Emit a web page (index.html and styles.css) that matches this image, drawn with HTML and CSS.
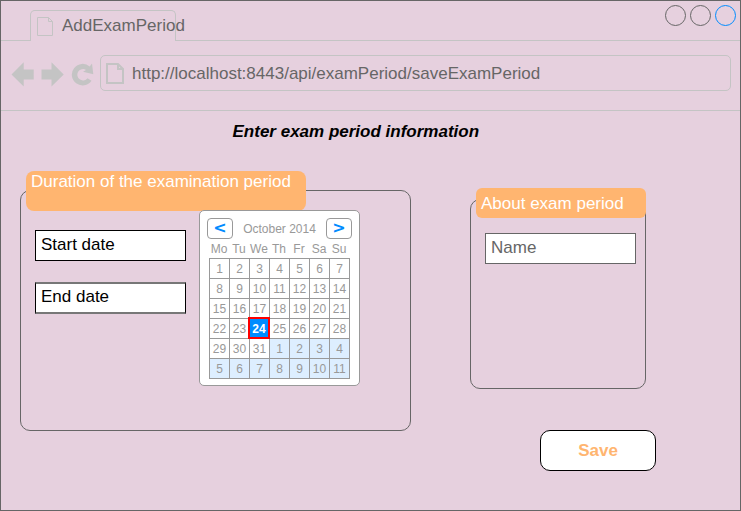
FILE: index.html
```html
<!DOCTYPE html>
<html lang="en">
<head>
<meta charset="utf-8">
<title>AddExamPeriod</title>
<link rel="stylesheet" href="styles.css">
</head>
<body>
<div class="window">
  <header class="tabs">
    <div class="tab">
      <svg class="tab-icon" width="17" height="20" viewBox="0 0 17 20"><path d="M.5.5h11l4 4v14H.5zM11.5.5v4h4"/></svg>
      <span>AddExamPeriod</span>
    </div>
    <div class="controls"><i></i><i></i><i class="active"></i></div>
  </header>
  <nav class="toolbar">
    <svg class="nav-icons" width="84" height="26" viewBox="11 61 84 26">
      <path d="M11.500 74.500 23.700 62.300v7.200h10v10h-10v7z"/>
      <path d="M63.700 74.500 51.500 62.300v7.200h-10v10h10v7z"/>
      <path d="M93.300 74.300 83 71.700 86 69.900A5.700 5.700 0 1 0 87.500 78.300L91.500 80.800A10.800 10.800 0 1 1 89.700 66.500L92 63.500z"/>
    </svg>
    <div class="address">
      <svg class="page-icon" width="18" height="21" viewBox="0 0 18 21"><path d="M1 1h11l5 5v14H1zM12 1v5h5"/></svg>
      <span>http://localhost:8443/api/examPeriod/saveExamPeriod</span>
    </div>
  </nav>
  <main>
    <h1>Enter exam period information</h1>
    <div class="columns">
      <section class="panel duration">
        <h2>Duration of the examination period</h2>
        <div class="dates">
          <div class="fields">
            <div class="field">Start date</div>
            <div class="field end">End date</div>
          </div>
          <div class="calendar">
            <div class="month">
              <span class="step">&lt;</span>
              <span>October 2014</span>
              <span class="step">&gt;</span>
            </div>
            <div class="weekdays"><b>Mo</b><b>Tu</b><b>We</b><b>Th</b><b>Fr</b><b>Sa</b><b>Su</b></div>
            <div class="days">
              <i>1</i><i>2</i><i>3</i><i>4</i><i>5</i><i>6</i><i>7</i>
              <i>8</i><i>9</i><i>10</i><i>11</i><i>12</i><i>13</i><i>14</i>
              <i>15</i><i>16</i><i>17</i><i>18</i><i>19</i><i>20</i><i>21</i>
              <i>22</i><i>23</i><i class="selected">24</i><i>25</i><i>26</i><i>27</i><i>28</i>
              <i>29</i><i>30</i><i>31</i><i class="next">1</i><i class="next">2</i><i class="next">3</i><i class="next">4</i>
              <i class="next">5</i><i class="next">6</i><i class="next">7</i><i class="next">8</i><i class="next">9</i><i class="next">10</i><i class="next">11</i>
            </div>
          </div>
        </div>
      </section>
      <div class="side">
        <section class="panel about">
          <h2>About exam period</h2>
          <div class="field name">Name</div>
        </section>
        <button class="save">Save</button>
      </div>
    </div>
  </main>
</div>
</body>
</html>
```
FILE: styles.css
```css
* { box-sizing: border-box; }
body { margin: 0; font-family: "Liberation Sans", Arial, sans-serif; font-size: 17px; line-height: 20px; color: #666; }
i { font-style: normal; }
svg { display: block; flex: none; }
.window { width: 741px; height: 511px; border: 1px solid #666; background: #e6d0de; overflow: hidden; }

.tabs { display: flex; justify-content: space-between; height: 40px; border-bottom: 1px solid #c4c4c4; }
.tab { display: flex; width: 146px; height: 31px; margin: 9px 0 0 29px; padding: 5px 0 0 6px; gap: 8px; border: 1px solid #c4c4c4; border-bottom: 0; border-radius: 5px 5px 0 0; background: #e6d0de; white-space: nowrap; }
.tab-icon { margin-top: 1px; fill: none; stroke: #c4c4c4; }
.controls { display: flex; gap: 4px; padding: 4px 4px 0 0; }
.controls i { width: 21px; height: 21px; border: 1px solid #666; border-radius: 50%; }
.controls .active { border-color: #008cff; }

.toolbar { display: flex; height: 70px; border-bottom: 1px solid #c4c4c4; padding: 14px 0 0 10px; gap: 5px; }
.nav-icons { margin-top: 6px; fill: #c4c4c4; }
.address { display: flex; width: 631px; height: 36px; padding: 8px 0 0 5px; gap: 8px; border: 1px solid #c4c4c4; border-radius: 5px; }
.page-icon { margin-top: -1px; fill: none; stroke: #c4c4c4; stroke-width: 2; }

h1 { margin: 0; padding: 11px 0 0 231.5px; height: 79px; font-size: 17px; line-height: 20px; font-style: italic; color: #000; }
.columns { display: flex; gap: 59px; padding-left: 19px; }
.panel { border: 1px solid #666; border-radius: 10px; }
.duration { width: 391px; height: 241px; }
.panel h2 { margin: -20px 0 0 5px; padding: 1px 5px; border-radius: 8px; background: #ffb570; color: #fff; font-size: 17px; font-weight: normal; line-height: 20px; }
.duration h2 { width: 280px; height: 40px; }
.dates { display: flex; gap: 13px; padding-left: 14px; }
.fields { padding-top: 19px; }
.field { width: 151px; height: 31px; padding: 4px 5px; border: 1px solid #000; background: #fff; color: #000; }
.end { height: 32px; margin-top: 21px; padding-top: 3px; border-top: 2px solid #777; border-bottom: 2px solid #777; }

.calendar { width: 161px; height: 176px; margin-top: -1px; padding: 7px; border: 1px solid #999; border-radius: 5px; background: #fff; color: #999; font-size: 12px; }
.month { display: flex; justify-content: space-between; align-items: center; height: 21px; }
.step { width: 26px; height: 21px; border: 1px solid #999; border-radius: 4px; color: #008cff; font: bold 16px/18px "DejaVu Sans", sans-serif; text-align: center; }
.weekdays, .days { display: grid; grid-template-columns: repeat(7, 20px); text-align: center; }
.weekdays { height: 19px; padding-left: 2px; }
.weekdays b { font-weight: normal; }
.days { width: 141px; margin-left: 2px; border: solid #999; border-width: 1px 0 0 1px; }
.days i { height: 20px; border: solid #999; border-width: 0 1px 1px 0; line-height: 20px; }
.days .next { background: #ddeeff; }
.days .selected { width: 22px; height: 22px; margin: -2px 0 0 -2px; border: 2px solid #f00; background: #008cff; color: #fff; font-weight: bold; line-height: 20px; position: relative; }

.side { padding-top: 9px; }
.about { width: 176px; height: 190px; }
.about h2 { width: 170px; height: 30px; margin-top: -12px; padding-top: 6px; border-radius: 6px; }
.name { margin: 15px 0 0 14px; border-color: #666; color: #666; }
.save { display: block; width: 116px; height: 41px; margin: 41px 0 0 70px; padding: 0; border: 1px solid #000; border-radius: 10px; background: #fff; color: #ffb570; font: bold 17px/20px "Liberation Sans", Arial, sans-serif; }
```
